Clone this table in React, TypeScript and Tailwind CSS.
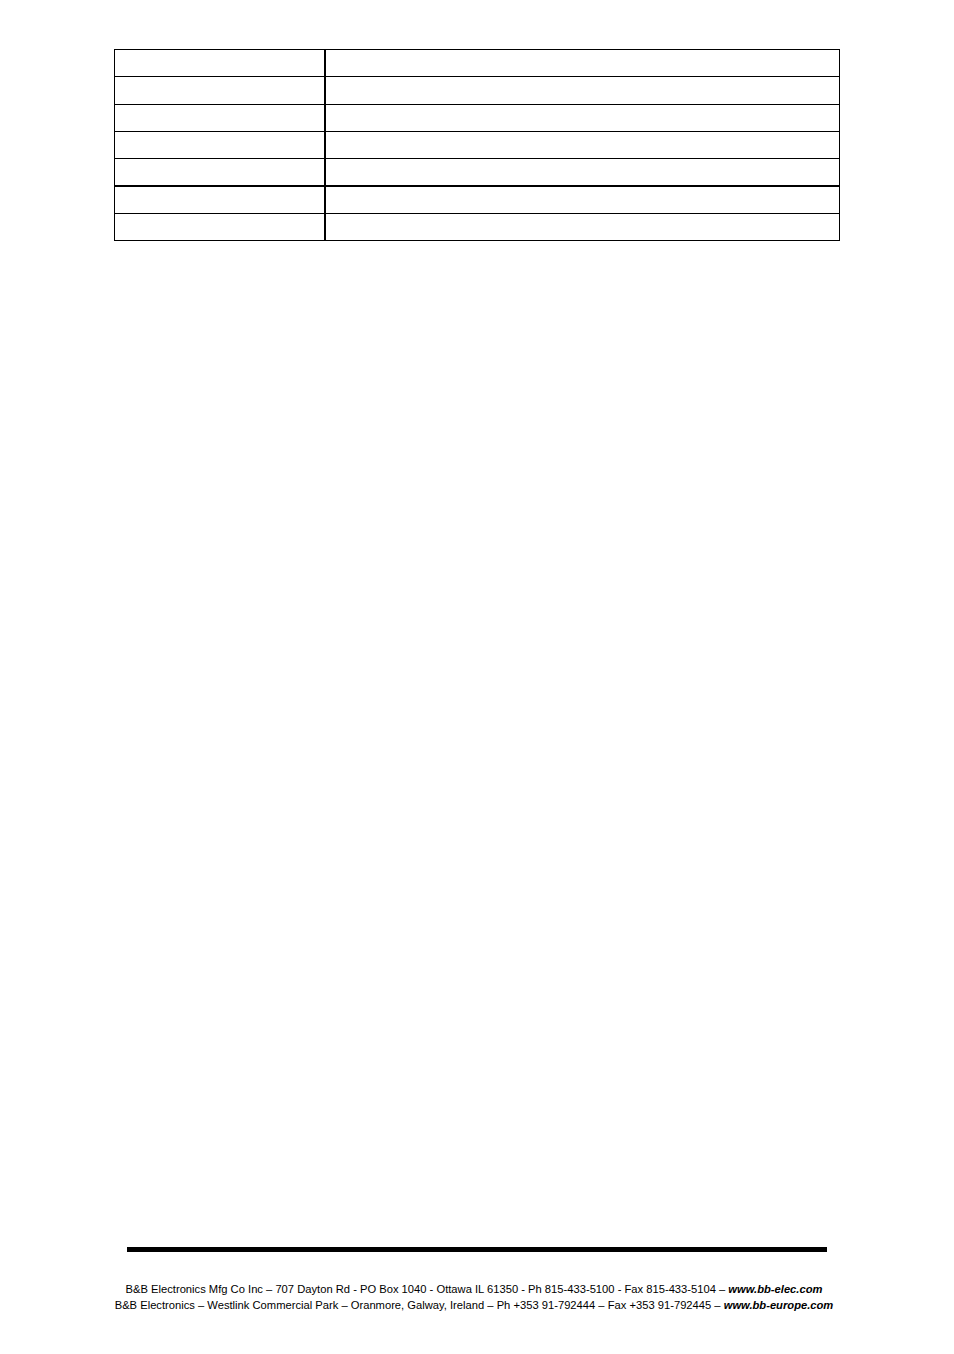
import React from "react";

const rows = [26, 28, 27, 27, 27, 28, 27];

export default function App() {
  return (
    <div className="w-[954px] h-[1354px] bg-white flex flex-col" style={{ fontFamily: '"Liberation Sans", Arial, sans-serif' }}>
      <div className="pt-[49px] pl-[114px]">
        <div className="w-[726px] border border-black flex flex-col">
          {rows.map((h, i) => (
            <div
              key={i}
              className={
                "flex " +
                (i === 0 ? "" : i === 5 ? "border-t-2 border-black" : "border-t border-black")
              }
              style={{ height: h }}
            >
              <div className="w-[211px] border-r-2 border-black" />
              <div className="flex-1" />
            </div>
          ))}
        </div>
      </div>
      <div className="mt-[1006px] ml-[127px] w-[700px] h-[5px] bg-black" />
      <div className="mt-[29px] flex flex-col items-center text-[11.2px] leading-[16px] text-black w-[948px]">
        <p className="whitespace-nowrap">
          B&amp;B Electronics Mfg Co Inc – 707 Dayton Rd - PO Box 1040 - Ottawa IL 61350 - Ph 815-433-5100 - Fax 815-433-5104 – <b><i>www.bb-elec.com</i></b>
        </p>
        <p className="whitespace-nowrap">
          B&amp;B Electronics – Westlink Commercial Park – Oranmore, Galway, Ireland – Ph +353 91-792444 – Fax +353 91-792445 – <b><i>www.bb-europe.com</i></b>
        </p>
      </div>
    </div>
  );
}
